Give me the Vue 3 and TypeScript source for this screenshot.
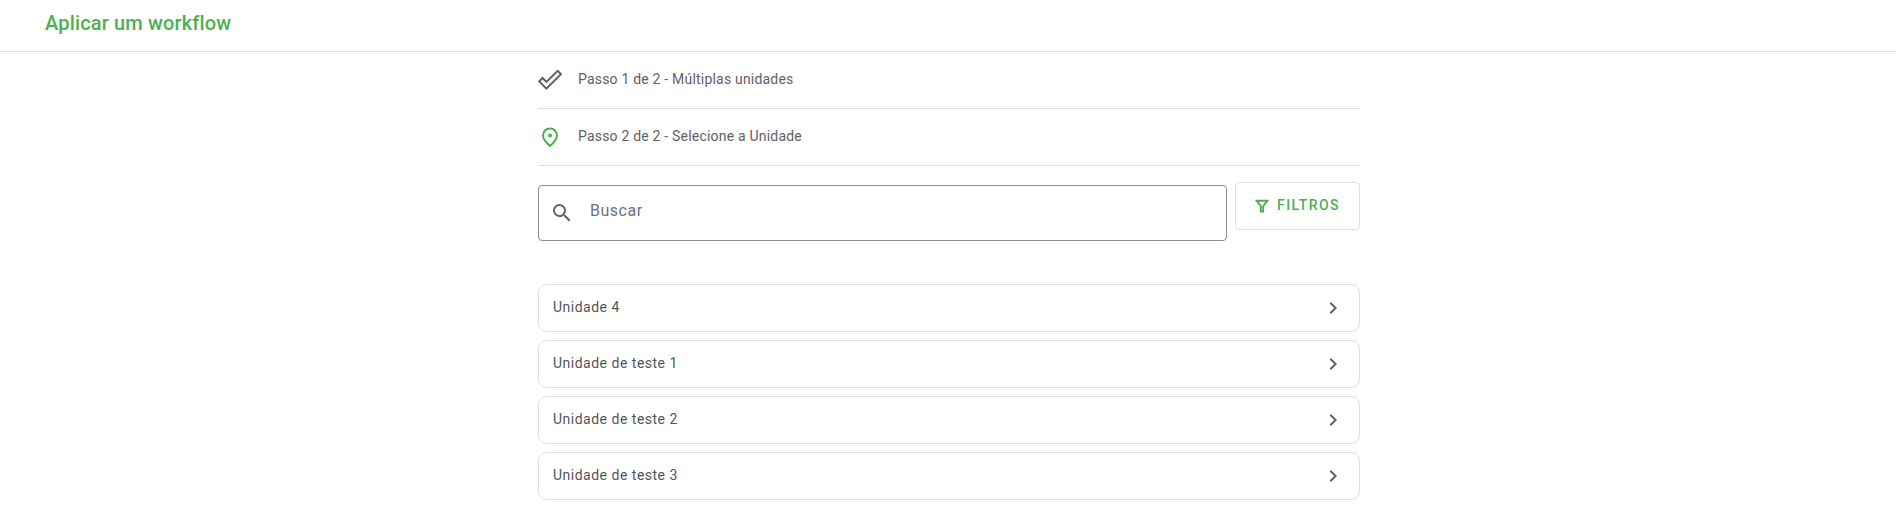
<script setup lang="ts">
const units: string[] = ['Unidade 4', 'Unidade de teste 1', 'Unidade de teste 2', 'Unidade de teste 3'];
</script>

<template>
  <div class="page">
    <header class="top-bar">
      <h1>Aplicar um workflow</h1>
    </header>
    <main class="content">
      <div class="step">
        <svg class="step-icon" viewBox="0 0 24 24" width="24" height="24" fill="none" stroke="#5f5f5f" stroke-width="2">
          <path d="M1.2 13.4 L4.6 10 L8.4 13.9 L19.7 2.9 L23 6.2 L8.4 20.7 Z" />
        </svg>
        <span>Passo 1 de 2 - Múltiplas unidades</span>
      </div>
      <div class="step">
        <svg class="step-icon" viewBox="0 0 24 24" width="24" height="24" fill="none">
          <path d="M12 21 C8 17.5 5 14.5 5 10.5 A7 7 0 0 1 19 10.5 C19 14.5 16 17.5 12 21 Z" stroke="#4caf50" stroke-width="2" />
          <circle cx="12" cy="10.5" r="2" fill="#4caf50" />
        </svg>
        <span>Passo 2 de 2 - Selecione a Unidade</span>
      </div>
      <div class="search-row">
        <label class="search">
          <svg viewBox="0 0 24 24" width="24" height="24" fill="#616161">
            <path d="M15.5 14h-.79l-.28-.27A6.47 6.47 0 0 0 16 9.5 6.5 6.5 0 1 0 9.5 16c1.61 0 3.09-.59 4.23-1.57l.27.28v.79l5 4.99L20.49 19l-4.99-5zm-6 0C7.01 14 5 11.99 5 9.5S7.01 5 9.5 5 14 7.01 14 9.5 11.99 14 9.5 14z" />
          </svg>
          <input type="text" placeholder="Buscar" />
        </label>
        <button class="filter" type="button">
          <svg viewBox="0 0 14 14" width="14" height="14" fill="none" stroke="#4caf50" stroke-width="1.9">
            <path d="M1.5 1.7 H12.5 L8.2 7 V12.6 H5.8 V7 Z" />
          </svg>
          <span>FILTROS</span>
        </button>
      </div>
      <ul class="units">
        <li v-for="unit in units" :key="unit" class="unit">
          <span>{{ unit }}</span>
          <svg viewBox="0 0 24 24" width="24" height="24" fill="#616161">
            <path d="M10 6 8.59 7.41 13.17 12l-4.58 4.59L10 18l6-6z" />
          </svg>
        </li>
      </ul>
    </main>
  </div>
</template>

<style>
html, body {
  background: #fff;
}
</style>

<style scoped>
.page {
  font-family: Roboto, "Liberation Sans", sans-serif;
}
.top-bar {
  height: 51px;
  border-bottom: 1px solid #e0e0e0;
  padding-left: 45px;
  display: flex;
  align-items: center;
}
.top-bar h1 {
  margin: 0 0 5px;
  font-size: 20px;
  font-weight: 500;
  letter-spacing: 0.15px;
  color: #4caf50;
}
.content {
  width: 822px;
  margin-left: 538px;
}
.step {
  height: 56px;
  border-bottom: 1px solid #e0e0e0;
  display: flex;
  align-items: center;
  gap: 16px;
  font-size: 14px;
  letter-spacing: 0.2px;
  color: #616161;
}
.step span {
  margin-bottom: 2px;
}
.step-icon {
  flex: none;
}
.search-row {
  display: flex;
  align-items: flex-start;
  gap: 8px;
  padding-top: 16px;
}
.search {
  flex: 1;
  height: 56px;
  margin-top: 3px;
  box-sizing: border-box;
  border: 1px solid #8c8c8c;
  border-radius: 4px;
  padding-left: 12px;
  display: flex;
  align-items: center;
  gap: 16px;
}
.search input {
  flex: 1;
  border: 0;
  outline: 0;
  padding: 0 0 6px;
  background: transparent;
  font: 400 16px Roboto, sans-serif;
  letter-spacing: 0.5px;
}
.search input::placeholder {
  color: #6b7280;
  opacity: 1;
}
.search svg {
  flex: none;
  margin-bottom: 1px;
  margin-left: -1px;
}
.filter {
  width: 125px;
  height: 48px;
  box-sizing: border-box;
  border: 1px solid #e0e0e0;
  border-radius: 4px;
  background: #fff;
  padding: 0;
  display: flex;
  align-items: center;
  justify-content: center;
  gap: 8px;
  font: 500 14px Roboto, sans-serif;
  letter-spacing: 1.4px;
  color: #4caf50;
}
.filter span {
  margin-bottom: 2px;
}
.units {
  list-style: none;
  margin: 0;
  padding: 43px 0 0;
  display: flex;
  flex-direction: column;
  gap: 8px;
}
.unit {
  height: 48px;
  box-sizing: border-box;
  border: 1px solid #e0e0e0;
  border-radius: 8px;
  padding: 0 14px;
  display: flex;
  align-items: center;
  justify-content: space-between;
  font-size: 14px;
  letter-spacing: 0.5px;
  color: #555;
}
.unit span {
  margin-bottom: 2px;
}
</style>
